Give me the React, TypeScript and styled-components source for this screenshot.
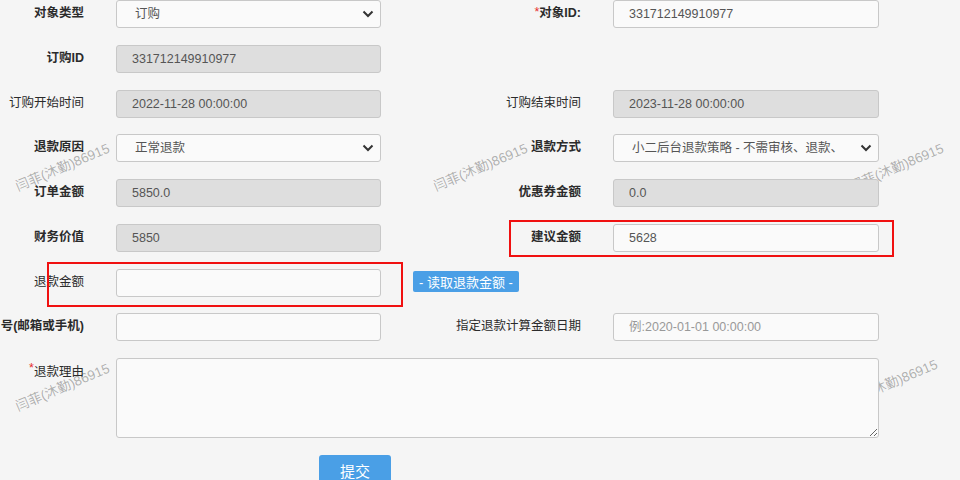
import styled, { createGlobalStyle } from "styled-components";

const GlobalStyle = createGlobalStyle`
  html, body {
    margin: 0;
    background: #f5f5f5;
  }
  body {
    font-family: "Liberation Sans", "Noto Sans CJK SC", sans-serif;
    color: #333;
  }
`;

const Page = styled.div`
  position: relative;
  width: 960px;
  height: 480px;
  overflow: hidden;
`;

const MarkLayer = styled.div`
  position: absolute;
  inset: 0;
  z-index: 0;
  pointer-events: none;
`;

const Mark = styled.span<{ $x: number; $y: number }>`
  position: absolute;
  left: ${(p) => p.$x}px;
  top: ${(p) => p.$y}px;
  transform: translate(-50%, -50%) rotate(-23deg);
  white-space: nowrap;
  font-size: 13.5px;
  font-family: "Liberation Sans", "Noto Sans CJK SC", sans-serif;
  color: rgba(0, 0, 0, 0.3);
`;

const Form = styled.div`
  position: relative;
  z-index: 1;
  display: grid;
  grid-template-columns: 84px 265px 168px 266px;
  grid-template-rows: repeat(8, 28px) 80px;
  column-gap: 32px;
  row-gap: 16.75px;
`;

const Label = styled.div<{ $strong?: boolean; $top?: boolean }>`
  display: flex;
  justify-content: flex-end;
  align-items: ${(p) => (p.$top ? "flex-start" : "center")};
  padding-top: ${(p) => (p.$top ? "3px" : "0")};
  padding-bottom: ${(p) => (p.$top ? "0" : "5px")};
  white-space: nowrap;
  font-size: 12.5px;
  font-weight: ${(p) => (p.$strong ? 700 : 400)};
  color: #2b2b2b;
`;

const Star = styled.span`
  color: #e62e2e;
  font-weight: 400;
`;

const Field = styled.input<{ $muted?: boolean }>`
  box-sizing: border-box;
  width: 100%;
  height: 28px;
  margin: 0;
  padding: 0 15px;
  border: 1px solid #c8c8c8;
  border-radius: 3px;
  background: ${(p) => (p.$muted ? "#dedede" : "#fafafa")};
  font: 12.5px "Liberation Sans", "Noto Sans CJK SC", sans-serif;
  color: #555;
  outline: none;
  &::placeholder {
    color: #999;
  }
`;

const SelectBox = styled.div`
  position: relative;
  height: 28px;
`;

const Select = styled.select`
  box-sizing: border-box;
  width: 100%;
  height: 28px;
  margin: 0;
  padding: 0 36px 0 18px;
  border: 1px solid #c8c8c8;
  border-radius: 3px;
  background: #fafafa;
  appearance: none;
  font: 12.5px "Liberation Sans", "Noto Sans CJK SC", sans-serif;
  color: #555;
  outline: none;
`;

const Chevron = styled.svg`
  position: absolute;
  right: 7px;
  top: 10px;
  pointer-events: none;
`;

const Area = styled.textarea`
  grid-column: 2 / 5;
  box-sizing: border-box;
  width: 100%;
  height: 80px;
  margin: 0;
  border: 1px solid #c8c8c8;
  border-radius: 3px;
  background: #fafafa;
  font: 12.5px "Liberation Sans", "Noto Sans CJK SC", sans-serif;
  outline: none;
`;

const ReadButton = styled.button`
  justify-self: start;
  align-self: center;
  height: 21px;
  margin: 0 0 2px;
  padding: 0 6px;
  border: none;
  border-radius: 2px;
  background: #4a9fe6;
  color: #fff;
  font: 13px "Liberation Sans", "Noto Sans CJK SC", sans-serif;
  white-space: nowrap;
`;

const Footer = styled.div`
  position: relative;
  z-index: 1;
  padding: 17px 0 0 319px;
`;

const Submit = styled.button`
  width: 72px;
  height: 30px;
  padding: 0;
  border: none;
  border-radius: 3px;
  background: #4a9fe6;
  color: #fff;
  font: 15px "Liberation Sans", "Noto Sans CJK SC", sans-serif;
`;

const Annotation = styled.div<{ $l: number; $t: number; $w: number; $h: number }>`
  position: absolute;
  left: ${(p) => p.$l}px;
  top: ${(p) => p.$t}px;
  width: ${(p) => p.$w}px;
  height: ${(p) => p.$h}px;
  box-sizing: border-box;
  border: 2px solid #f01010;
  pointer-events: none;
`;

const Empty = styled.div``;

const marks = [
  { x: 62, y: 166 },
  { x: 480, y: 166 },
  { x: 896, y: 166 },
  { x: 62, y: 386 },
  { x: 480, y: 386 },
  { x: 890, y: 382 },
];

const Arrow = () => (
  <Chevron width="12" height="8" viewBox="0 0 12 8">
    <path d="M1.5 1.5 L6 6 L10.5 1.5" fill="none" stroke="#333" strokeWidth="2" />
  </Chevron>
);

export default function App() {
  return (
    <Page>
      <GlobalStyle />
      <MarkLayer>
        {marks.map((m, i) => (
          <Mark key={i} $x={m.x} $y={m.y}>
            闫菲(沐勤)86915
          </Mark>
        ))}
      </MarkLayer>
      <Form>
        <Label $strong>对象类型</Label>
        <SelectBox>
          <Select defaultValue="订购">
            <option>订购</option>
          </Select>
          <Arrow />
        </SelectBox>
        <Label $strong>
          <Star>*</Star>对象ID:
        </Label>
        <Field defaultValue="331712149910977" />

        <Label $strong>订购ID</Label>
        <Field $muted readOnly value="331712149910977" />
        <Empty />
        <Empty />

        <Label>订购开始时间</Label>
        <Field $muted readOnly value="2022-11-28 00:00:00" />
        <Label>订购结束时间</Label>
        <Field $muted readOnly value="2023-11-28 00:00:00" />

        <Label $strong>退款原因</Label>
        <SelectBox>
          <Select defaultValue="正常退款">
            <option>正常退款</option>
          </Select>
          <Arrow />
        </SelectBox>
        <Label $strong>退款方式</Label>
        <SelectBox>
          <Select defaultValue="a">
            <option value="a">小二后台退款策略 - 不需审核、退款、退订购关系</option>
          </Select>
          <Arrow />
        </SelectBox>

        <Label $strong>订单金额</Label>
        <Field $muted readOnly value="5850.0" />
        <Label $strong>优惠券金额</Label>
        <Field $muted readOnly value="0.0" />

        <Label $strong>财务价值</Label>
        <Field $muted readOnly value="5850" />
        <Label $strong>建议金额</Label>
        <Field defaultValue="5628" />

        <Label>退款金额</Label>
        <Field />
        <ReadButton>- 读取退款金额 -</ReadButton>
        <Empty />

        <Label $strong>号(邮箱或手机)</Label>
        <Field />
        <Label>指定退款计算金额日期</Label>
        <Field placeholder="例:2020-01-01 00:00:00" />

        <Label $top>
          <Star>*</Star>退款理由
        </Label>
        <Area />

        <Annotation $l={47} $t={262} $w={356} $h={45} />
        <Annotation $l={509} $t={220} $w={385} $h={37} />
      </Form>
      <Footer>
        <Submit>提交</Submit>
      </Footer>
    </Page>
  );
}
